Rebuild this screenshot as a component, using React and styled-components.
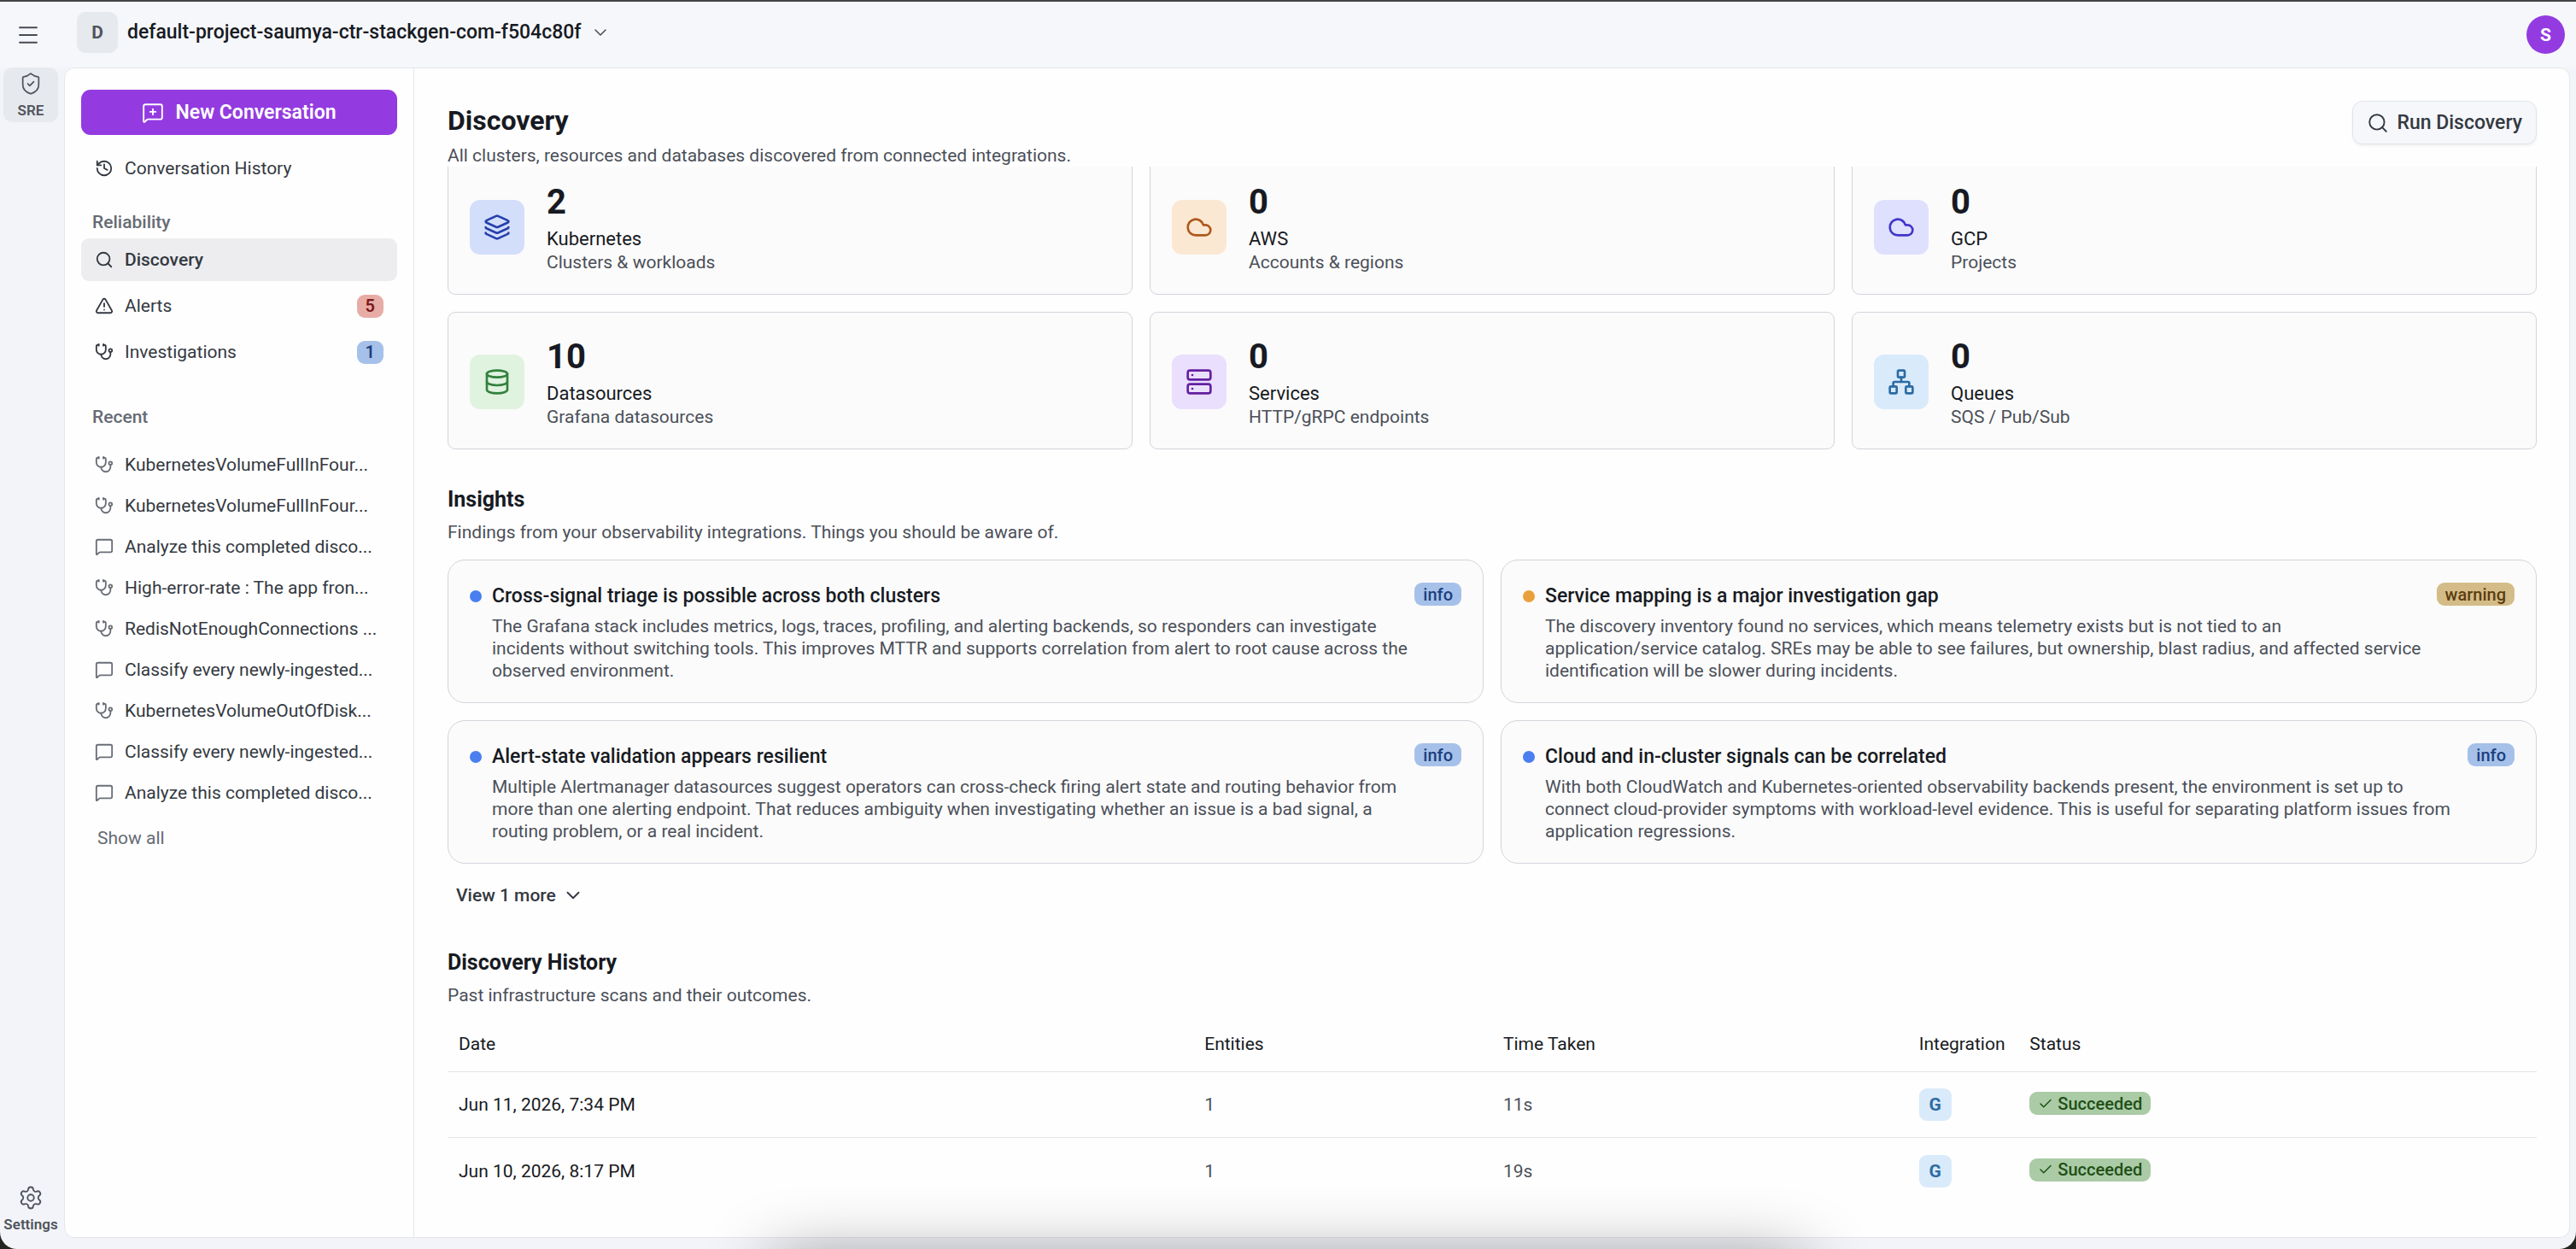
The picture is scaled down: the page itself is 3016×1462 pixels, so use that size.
import React, { useLayoutEffect, useRef, useState } from "react";
import styled, { createGlobalStyle } from "styled-components";
import {
  Check,
  ChevronDown,
  Cloud,
  Database,
  History,
  Layers,
  Menu,
  MessageSquare,
  MessageSquarePlus,
  Network,
  Search,
  Server,
  Settings,
  ShieldCheck,
  Stethoscope,
  TriangleAlert,
} from "lucide-react";

const navItems = [
  { id: "discovery", label: "Discovery", icon: Search },
  { id: "alerts", label: "Alerts", icon: TriangleAlert, count: 5, tone: "danger" },
  { id: "investigations", label: "Investigations", icon: Stethoscope, count: 1, tone: "info" },
];

const recents = [
  { icon: Stethoscope, label: "KubernetesVolumeFullInFour..." },
  { icon: Stethoscope, label: "KubernetesVolumeFullInFour..." },
  { icon: MessageSquare, label: "Analyze this completed disco..." },
  { icon: Stethoscope, label: "High-error-rate : The app fron..." },
  { icon: Stethoscope, label: "RedisNotEnoughConnections ..." },
  { icon: MessageSquare, label: "Classify every newly-ingested..." },
  { icon: Stethoscope, label: "KubernetesVolumeOutOfDisk..." },
  { icon: MessageSquare, label: "Classify every newly-ingested..." },
  { icon: MessageSquare, label: "Analyze this completed disco..." },
];

const resources = [
  { name: "Kubernetes", detail: "Clusters & workloads", count: 2, icon: Layers, bg: "#d3defa", color: "#2540ad" },
  { name: "AWS", detail: "Accounts & regions", count: 0, icon: Cloud, bg: "#fbe8d3", color: "#b0581c" },
  { name: "GCP", detail: "Projects", count: 0, icon: Cloud, bg: "#dee0fe", color: "#4236ca" },
  { name: "Datasources", detail: "Grafana datasources", count: 10, icon: Database, bg: "#e0f3df", color: "#34803f" },
  { name: "Services", detail: "HTTP/gRPC endpoints", count: 0, icon: Server, bg: "#eadffd", color: "#6420a0" },
  { name: "Queues", detail: "SQS / Pub/Sub", count: 0, icon: Network, bg: "#d9eafa", color: "#2c6ca4" },
];

const insights = [
  {
    title: "Cross-signal triage is possible across both clusters",
    level: "info",
    text: "The Grafana stack includes metrics, logs, traces, profiling, and alerting backends, so responders can investigate incidents without switching tools. This improves MTTR and supports correlation from alert to root cause across the observed environment.",
  },
  {
    title: "Service mapping is a major investigation gap",
    level: "warning",
    text: "The discovery inventory found no services, which means telemetry exists but is not tied to an application/service catalog. SREs may be able to see failures, but ownership, blast radius, and affected service identification will be slower during incidents.",
  },
  {
    title: "Alert-state validation appears resilient",
    level: "info",
    text: "Multiple Alertmanager datasources suggest operators can cross-check firing alert state and routing behavior from more than one alerting endpoint. That reduces ambiguity when investigating whether an issue is a bad signal, a routing problem, or a real incident.",
  },
  {
    title: "Cloud and in-cluster signals can be correlated",
    level: "info",
    text: "With both CloudWatch and Kubernetes-oriented observability backends present, the environment is set up to connect cloud-provider symptoms with workload-level evidence. This is useful for separating platform issues from application regressions.",
  },
];

const scans = [
  { date: "Jun 11, 2026, 7:34 PM", entities: 1, time: "11s" },
  { date: "Jun 10, 2026, 8:17 PM", entities: 1, time: "19s" },
];

const tones = {
  info: { bg: "#a6c1e9", color: "#1c3f80" },
  danger: { bg: "#e8aca7", color: "#7b1717" },
  warning: { bg: "#d4bc88", color: "#5c3d10" },
  success: { bg: "#aacba5", color: "#1f4f17" },
};

const App = () => {
  const [active, setActive] = useState("discovery");
  const scroller = useRef(null);

  useLayoutEffect(() => {
    scroller.current.scrollTop = 11;
  }, []);

  return (
    <>
      <GlobalStyle />
      <Shell>
        <TopBar>
          <IconButton aria-label="Toggle menu">
            <Menu size={30} strokeWidth={1.5} />
          </IconButton>
          <ProjectButton>
            <ProjectTile>D</ProjectTile>
            default-project-saumya-ctr-stackgen-com-f504c80f
            <ChevronDown size={24} strokeWidth={1.5} />
          </ProjectButton>
          <Avatar aria-label="Account">S</Avatar>
        </TopBar>
        <Body>
          <Rail>
            <RailLink href="#sre" $active>
              <span>
                <ShieldCheck size={28} strokeWidth={1.5} />
              </span>
              SRE
            </RailLink>
            <RailLink href="#settings">
              <span>
                <Settings size={30} strokeWidth={1.5} />
              </span>
              Settings
            </RailLink>
          </Rail>
          <Panel>
            <Sidebar>
              <NewButton>
                <MessageSquarePlus size={26} strokeWidth={1.75} />
                New Conversation
              </NewButton>
              <HistoryNav>
                <NavLink href="#history">
                  <History size={22} />
                  Conversation History
                </NavLink>
              </HistoryNav>
              <GroupLabel>Reliability</GroupLabel>
              <Nav>
                {navItems.map(({ id, label, icon: Icon, count, tone }) => (
                  <NavLink
                    key={id}
                    href={`#${id}`}
                    $active={active === id}
                    onClick={() => setActive(id)}
                  >
                    <Icon size={22} />
                    {label}
                    {count && <Count $tone={tone}>{count}</Count>}
                  </NavLink>
                ))}
              </Nav>
              <RecentLabel>Recent</RecentLabel>
              <RecentList>
                {recents.map(({ icon: Icon, label }, i) => (
                  <li key={i}>
                    <RecentLink href="#conversation">
                      <Icon size={22} />
                      {label}
                    </RecentLink>
                  </li>
                ))}
              </RecentList>
              <ShowAll>Show all</ShowAll>
            </Sidebar>
            <Main>
              <PageHeader>
                <div>
                  <h1>Discovery</h1>
                  <Muted>
                    All clusters, resources and databases discovered from
                    connected integrations.
                  </Muted>
                </div>
                <RunButton>
                  <Search size={26} strokeWidth={1.75} />
                  Run Discovery
                </RunButton>
              </PageHeader>
              <Scroller ref={scroller}>
                <ResourceGrid>
                  {resources.map(({ name, detail, count, icon: Icon, bg, color }) => (
                    <ResourceCard key={name}>
                      <ResourceIcon $bg={bg} $color={color}>
                        <Icon size={32} />
                      </ResourceIcon>
                      <div>
                        <ResourceCount>{count}</ResourceCount>
                        <ResourceName>{name}</ResourceName>
                        <Muted>{detail}</Muted>
                      </div>
                    </ResourceCard>
                  ))}
                </ResourceGrid>

                <Section>
                  <h2>Insights</h2>
                  <Muted>
                    Findings from your observability integrations. Things you
                    should be aware of.
                  </Muted>
                  <InsightGrid>
                    {insights.map(({ title, level, text }) => (
                      <InsightCard key={title}>
                        <Dot $level={level} />
                        <div>
                          <h3>{title}</h3>
                          <Muted>{text}</Muted>
                        </div>
                        <Badge $tone={level}>{level}</Badge>
                      </InsightCard>
                    ))}
                  </InsightGrid>
                  <ViewMore>
                    View 1 more
                    <ChevronDown size={26} strokeWidth={1.75} />
                  </ViewMore>
                </Section>

                <Section>
                  <h2>Discovery History</h2>
                  <Muted>Past infrastructure scans and their outcomes.</Muted>
                  <ScanTable>
                    <thead>
                      <tr>
                        <Th $width="35.7%">Date</Th>
                        <Th $width="14.3%">Entities</Th>
                        <Th $width="19.9%">Time Taken</Th>
                        <Th $width="5.3%">Integration</Th>
                        <Th>Status</Th>
                      </tr>
                    </thead>
                    <tbody>
                      {scans.map(({ date, entities, time }) => (
                        <tr key={date}>
                          <Td $strong>{date}</Td>
                          <Td>{entities}</Td>
                          <Td>{time}</Td>
                          <Td>
                            <IntegrationTile>G</IntegrationTile>
                          </Td>
                          <Td>
                            <Badge $tone="success">
                              <Check size={18} />
                              Succeeded
                            </Badge>
                          </Td>
                        </tr>
                      ))}
                    </tbody>
                  </ScanTable>
                </Section>
              </Scroller>
            </Main>
          </Panel>
        </Body>
      </Shell>
      <DockShadow />
    </>
  );
};

const GlobalStyle = createGlobalStyle`
  * {
    box-sizing: border-box;
  }
  body {
    margin: 0;
    background: #23261f;
    color: #171a22;
    font-family: Roboto, "Liberation Sans", sans-serif;
    font-size: 21px;
    line-height: 28px;
  }
  h1, h2, h3, p, ul {
    margin: 0;
    padding: 0;
  }
  button {
    font: inherit;
    color: inherit;
    border: none;
    background: none;
    padding: 0;
    cursor: pointer;
  }
  a {
    color: inherit;
    text-decoration: none;
  }
  svg {
    flex-shrink: 0;
  }
`;

const Shell = styled.div`
  display: flex;
  flex-direction: column;
  height: 100vh;
  border-top: 2px solid #444545;
  border-radius: 0 0 20px 20px;
  background: #f3f4f9;
  overflow: hidden;
`;

const TopBar = styled.header`
  display: flex;
  align-items: center;
  height: 77px;
  padding: 0 13px 0 18px;
  background: #f6f7fb;
`;

const IconButton = styled.button`
  display: flex;
  color: #474b53;
`;

const ProjectButton = styled.button`
  display: flex;
  align-items: center;
  gap: 11px;
  margin: 0 auto 6px 42px;
  font-size: 23px;
  font-weight: 500;

  svg {
    color: #474b53;
  }
`;

const ProjectTile = styled.span`
  display: grid;
  place-items: center;
  width: 48px;
  height: 48px;
  border-radius: 10px;
  background: #e6e9ed;
  color: #50545c;
  font-size: 21px;
  font-weight: 700;
`;

const Avatar = styled.button`
  width: 45px;
  height: 45px;
  border-radius: 50%;
  background: #933be0;
  color: #fff;
  font-weight: 700;
`;

const Body = styled.div`
  display: flex;
  flex: 1;
  min-height: 0;
  padding: 0 7px 13px 0;
`;

const Rail = styled.nav`
  display: flex;
  flex-direction: column;
  justify-content: space-between;
  width: 75px;
  padding: 0 7px 2px 4px;
`;

const RailLink = styled.a`
  display: flex;
  flex-direction: column;
  align-items: center;
  height: 64px;
  padding-top: 4px;
  border-radius: 10px;
  background: ${(p) => (p.$active ? "#e6e9ed" : "transparent")};
  color: #50545c;
  font-size: 17px;
  font-weight: 600;
  line-height: 20px;

  span {
    display: grid;
    place-items: center;
    height: 30px;
    margin-bottom: 6px;
  }
`;

const Panel = styled.div`
  display: flex;
  flex: 1;
  min-width: 0;
  border: 1px solid #e4e6ec;
  border-radius: 12px;
  background: #fefefe;
  overflow: hidden;
`;

const Sidebar = styled.aside`
  display: flex;
  flex-direction: column;
  width: 409px;
  flex-shrink: 0;
  padding: 25px 19px;
  border-right: 1px solid #e4e6ec;
  color: #343941;
`;

const NewButton = styled.button`
  display: flex;
  align-items: center;
  justify-content: center;
  gap: 13px;
  height: 53px;
  border-radius: 11px;
  background: #933be0;
  color: #fff;
  font-size: 23px;
  font-weight: 600;
`;

const Nav = styled.nav`
  display: flex;
  flex-direction: column;
  gap: 4px;
`;

const HistoryNav = styled(Nav)`
  margin: 14px 0 24px;
`;

const NavLink = styled.a`
  display: flex;
  align-items: center;
  gap: 13px;
  height: 50px;
  padding: 0 16px;
  border-radius: 9px;
  background: ${(p) => (p.$active ? "#ededef" : "transparent")};
  font-weight: ${(p) => (p.$active ? 500 : 400)};
`;

const RecentLink = styled(NavLink)`
  height: 48px;
  white-space: nowrap;

  svg {
    color: #6a6e77;
  }
`;

const GroupLabel = styled.h2`
  margin: 0 13px 5px;
  color: #666b74;
  font-size: 21px;
  font-weight: 500;
`;

const RecentLabel = styled(GroupLabel)`
  margin: 37px 13px 18px;
`;

const RecentList = styled.ul`
  list-style: none;
`;

const ShowAll = styled.button`
  align-self: flex-start;
  margin-top: 15px;
  padding-left: 19px;
  color: #666b74;
`;

const Badge = styled.span`
  display: inline-flex;
  align-items: center;
  gap: 5px;
  height: 27px;
  padding: 0 10px;
  border-radius: 9px;
  background: ${(p) => tones[p.$tone].bg};
  color: ${(p) => tones[p.$tone].color};
  font-size: 20px;
  font-weight: 500;
`;

const Count = styled(Badge)`
  margin-left: auto;
  font-weight: 600;
`;

const Main = styled.main`
  display: flex;
  flex: 1;
  flex-direction: column;
  min-width: 0;
`;

const PageHeader = styled.div`
  display: flex;
  align-items: flex-start;
  justify-content: space-between;
  padding: 38px 38px 0 39px;

  h1 {
    margin-bottom: 5px;
    font-size: 32px;
    font-weight: 700;
    line-height: 46px;
  }
`;

const Muted = styled.p`
  color: #4b5059;
  line-height: 26px;
`;

const RunButton = styled.button`
  display: flex;
  align-items: center;
  gap: 9px;
  height: 51px;
  padding: 0 16px;
  border: 1px solid #e1e4e8;
  border-radius: 12px;
  background: #f6f7fb;
  box-shadow: 0 2px 3px rgba(20, 24, 32, 0.06);
  color: #343941;
  font-size: 23px;
  font-weight: 500;
`;

const Scroller = styled.div`
  flex: 1;
  min-height: 0;
  padding: 0 38px 40px 39px;
  overflow-y: auto;
  scrollbar-width: none;
`;

const ResourceGrid = styled.div`
  display: grid;
  grid-template-columns: repeat(3, 1fr);
  gap: 20px;
`;

const ResourceCard = styled.article`
  display: flex;
  align-items: center;
  gap: 26px;
  padding: 26px 25px 24px;
  border: 1px solid #d3d5dc;
  border-radius: 9px;
  background: #fbfbfb;
`;

const ResourceIcon = styled.div`
  display: grid;
  place-items: center;
  width: 64px;
  height: 64px;
  border-radius: 12px;
  background: ${(p) => p.$bg};
  color: ${(p) => p.$color};
`;

const ResourceCount = styled.div`
  margin-bottom: 3px;
  font-size: 40px;
  font-weight: 700;
  line-height: 52px;
`;

const ResourceName = styled.div`
  font-size: 22px;
`;

const Section = styled.section`
  margin-top: 43px;

  h2 {
    margin-bottom: 9px;
    font-size: 25px;
    font-weight: 700;
    line-height: 32px;
  }
`;

const InsightGrid = styled.div`
  display: grid;
  grid-template-columns: repeat(2, 1fr);
  gap: 20px;
  margin-top: 19px;
`;

const InsightCard = styled.article`
  display: grid;
  grid-template-columns: auto 1fr auto;
  align-items: start;
  padding: 26px 25px 24px;
  border: 1px solid #d3d5dc;
  border-radius: 20px;
  background: #fbfbfb;

  h3 {
    margin-bottom: 6px;
    font-size: 23px;
    font-weight: 500;
    line-height: 32px;
  }
  ${Badge} {
    margin-left: 8px;
  }
`;

const Dot = styled.span`
  width: 14px;
  height: 14px;
  margin: 9px 12px 0 0;
  border-radius: 50%;
  background: ${(p) => (p.$level === "warning" ? "#e9a03b" : "#4a7ff0")};
`;

const ViewMore = styled.button`
  display: flex;
  align-items: center;
  gap: 7px;
  height: 41px;
  margin-top: 16px;
  padding: 0 10px;
  color: #343941;
  font-weight: 500;
`;

const ScanTable = styled.table`
  width: 100%;
  margin-top: 12px;
  border-spacing: 0;
  table-layout: fixed;
  text-align: left;

  tr:last-child td {
    border-bottom: none;
  }
`;

const Th = styled.th`
  width: ${(p) => p.$width || "auto"};
  padding: 18px 13px;
  border-bottom: 1px solid #e2e4e9;
  font-weight: 400;
`;

const Td = styled.td`
  height: 77px;
  padding: 0 13px;
  border-bottom: 1px solid #e2e4e9;
  color: ${(p) => (p.$strong ? "#171a22" : "#4b5059")};
`;

const IntegrationTile = styled.span`
  display: grid;
  place-items: center;
  width: 38px;
  height: 38px;
  border-radius: 9px;
  background: #d9eafa;
  color: #2c6ca4;
  font-weight: 700;
`;

const DockShadow = styled.div`
  position: fixed;
  top: calc(100% + 14px);
  left: 30%;
  right: 30%;
  height: 60px;
  box-shadow: 0 0 80px rgba(0, 0, 0, 0.45);
  pointer-events: none;
`;

export default App;
